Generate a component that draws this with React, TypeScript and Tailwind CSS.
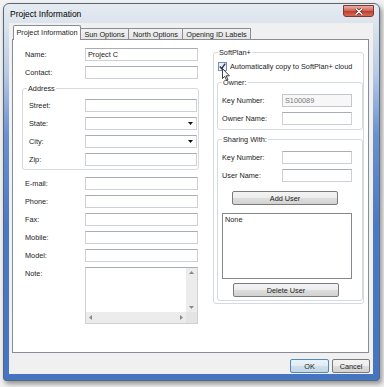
import type { ReactNode } from 'react';

const Box = ({ className = '' }: { className?: string }) => (
  <div className={`h-[13px] bg-white border border-[#cdd0d6] border-t-[#a9adb5] ${className}`} />
);

const Combo = () => (
  <div className="h-[13px] w-[112px] bg-white border border-[#cdd0d6] border-t-[#a9adb5] flex items-center justify-end pr-[3px]">
    <svg width="5" height="3" viewBox="0 0 5 3">
      <path d="M0 0h5L2.5 3z" fill="#111" />
    </svg>
  </div>
);

const Row = ({ label, labelClass, children }: { label: string; labelClass: string; children: ReactNode }) => (
  <div className="flex items-center">
    <span className={labelClass}>{label}</span>
    {children}
  </div>
);

const Btn = ({ children, className = '' }: { children: ReactNode; className?: string }) => (
  <div
    className={`h-[14px] flex items-center justify-center rounded-[2px] border border-[#7a7a7a] bg-[linear-gradient(to_bottom,#f4f4f4_0%,#ececec_50%,#dedede_50%,#d2d2d2_100%)] ${className}`}
  >
    {children}
  </div>
);

const Cursor = () => (
  <svg className="absolute left-[3px] top-[5px]" width="8" height="13" viewBox="0 0 8 13">
    <path d="M0.5 0.5v10l2.3-2.2 1.8 4 1.4-.6-1.8-3.9h3.2z" fill="#fff" stroke="#111" strokeWidth="0.8" strokeLinejoin="round" />
  </svg>
);

const Note = () => (
  <div className="w-[113px] h-[57px] border border-[#cdd0d6] border-t-[#a9adb5] bg-white grid grid-cols-[1fr_11px] grid-rows-[1fr_11px]">
    <div />
    <div className="bg-[#ececec] flex flex-col items-center justify-between py-[3px]">
      <svg width="5" height="3" viewBox="0 0 5 3"><path d="M0 3h5L2.5 0z" fill="#8a8a8a" /></svg>
      <svg width="5" height="3" viewBox="0 0 5 3"><path d="M0 0h5L2.5 3z" fill="#8a8a8a" /></svg>
    </div>
    <div className="bg-[#ececec] flex items-center justify-between px-[3px]">
      <svg width="3" height="5" viewBox="0 0 3 5"><path d="M3 0v5L0 2.5z" fill="#8a8a8a" /></svg>
      <svg width="3" height="5" viewBox="0 0 3 5"><path d="M0 0v5l3-2.5z" fill="#8a8a8a" /></svg>
    </div>
    <div className="bg-[#e4e4e4]" />
  </div>
);

const outer = 'w-[63px] pl-[3px]';
const inner = 'w-[62px] pl-[6px]';
const right = 'w-[64px] pl-[4px]';

export default function App() {
  return (
    <div className="w-[384px] h-[387px] overflow-hidden bg-[#f1f1f1] pt-[3px] pl-[3px] font-['Liberation_Sans',Arial,sans-serif] text-[7.3px] leading-[9px] text-[#1c1c1c]">
      <div className="w-[377px] h-[378px] rounded-t-[6px] rounded-b-[3px] border border-[#56687e] bg-[linear-gradient(to_bottom,#e6ebf1_0px,#dae2ec_22px,#b7c9e5_70px,#6b91cf_130px,#4b79c3_220px,#4574c0_100%)] shadow-[2px_3px_5px_rgba(0,0,0,0.4)] flex flex-col pl-[5px] pr-[6px] pb-[6px]">
        {/* title bar */}
        <div className="h-[19px] flex justify-between items-start">
          <span className="pt-[5px] pl-[1px] text-[8.5px] leading-[10px] text-black">Project Information</span>
          <div className="mt-[1px] -mr-[1px] w-[31px] h-[12px] rounded-b-[3px] border border-[#7a3a34] bg-[linear-gradient(to_bottom,#e9aea4_0%,#d0685a_45%,#c2402f_55%,#d46c59_100%)] flex items-center justify-center">
            <svg width="8" height="7" viewBox="0 0 8 7">
              <path d="M1 0.8l6 5.4M7 0.8l-6 5.4" stroke="#4a1c18" strokeWidth="2.6" strokeLinecap="round" />
              <path d="M1 0.8l6 5.4M7 0.8l-6 5.4" stroke="#fff" strokeWidth="1.5" strokeLinecap="round" />
            </svg>
          </div>
        </div>

        {/* client area */}
        <div className="flex-1 bg-[#f0f0f0] flex flex-col pt-[2px]">
          <div className="flex items-end h-[15px] ml-[4px] -mb-px relative z-10">
            <div className="h-[15px] w-[68px] bg-white border border-b-0 border-[#898c95] rounded-t-[2px] flex items-center justify-center pb-[1px]">
              Project Information
            </div>
            <div className="h-[12px] w-[49px] -ml-px border border-[#898c95] bg-[linear-gradient(to_bottom,#f3f3f3,#e4e4e4)] flex items-center justify-center">
              Sun Options
            </div>
            <div className="h-[12px] w-[55px] -ml-px border border-[#898c95] bg-[linear-gradient(to_bottom,#f3f3f3,#e4e4e4)] flex items-center justify-center">
              North Options
            </div>
            <div className="h-[12px] w-[69px] -ml-px border border-[#898c95] bg-[linear-gradient(to_bottom,#f3f3f3,#e4e4e4)] flex items-center justify-center">
              Opening ID Labels
            </div>
          </div>

          <div className="ml-[3px] w-[357px] h-[314px] bg-white border border-[#898c95] flex items-start">
            {/* left column */}
            <div className="ml-[9px] w-[177px] pt-[8px] flex flex-col gap-[5px]">
              <Row label="Name:" labelClass={outer}>
                <div className="h-[13px] w-[113px] bg-white border border-[#cdd0d6] border-t-[#a9adb5] flex items-center pl-[2px]">Project C</div>
              </Row>
              <Row label="Contact:" labelClass={outer}><Box className="w-[113px]" /></Row>
              <fieldset className="border border-[#d5dadf] rounded-[3px] pt-[6px] pb-[3px]">
                <legend className="ml-[4px] px-[1px]">Address</legend>
                <div className="flex flex-col gap-[5px]">
                  <Row label="Street:" labelClass={inner}><Box className="w-[112px]" /></Row>
                  <Row label="State:" labelClass={inner}><Combo /></Row>
                  <Row label="City:" labelClass={inner}><Combo /></Row>
                  <Row label="Zip:" labelClass={inner}><Box className="w-[112px]" /></Row>
                </div>
              </fieldset>
              <div className="mt-[2px]">
                <Row label="E-mail:" labelClass={outer}><Box className="w-[113px]" /></Row>
              </div>
              <Row label="Phone:" labelClass={outer}><Box className="w-[113px]" /></Row>
              <Row label="Fax:" labelClass={outer}><Box className="w-[113px]" /></Row>
              <Row label="Mobile:" labelClass={outer}><Box className="w-[113px]" /></Row>
              <Row label="Model:" labelClass={outer}><Box className="w-[113px]" /></Row>
              <div className="flex items-start">
                <span className={`${outer} pt-[2px]`}>Note:</span>
                <Note />
              </div>
            </div>

            {/* right column */}
            <div className="ml-[14px] w-[151px] pt-[8px]">
              <fieldset className="border border-[#d5dadf] rounded-[3px] pb-[2px]">
                <legend className="ml-[4px] px-[1px]">SoftPlan+</legend>
                <div className="flex items-center mt-[5px] pl-[4px]">
                  <div className="relative w-[9px] h-[9px] border border-[#7b90ab] bg-[linear-gradient(to_bottom,#e4ebf3,#f8fafc)] flex items-center justify-center">
                    <svg width="7" height="7" viewBox="0 0 7 7">
                      <path d="M0.8 3.6l1.8 2 3.6-5" stroke="#2b3a55" strokeWidth="1.5" fill="none" />
                    </svg>
                    <Cursor />
                  </div>
                  <span className="ml-[3px]">Automatically copy to SoftPlan+ cloud</span>
                </div>

                <fieldset className="ml-[3px] mt-[7px] w-[146px] border border-[#d5dadf] rounded-[3px] pt-[7px] pb-[4px]">
                  <legend className="ml-[4px] px-[1px]">Owner:</legend>
                  <div className="flex flex-col gap-[5px]">
                    <Row label="Key Number:" labelClass={right}>
                      <div className="h-[13px] w-[70px] bg-[#f7f7f7] border border-[#c3c6cc] flex items-center pl-[2px] text-[#7a7a7a]">S100089</div>
                    </Row>
                    <Row label="Owner Name:" labelClass={right}><Box className="w-[70px]" /></Row>
                  </div>
                </fieldset>

                <fieldset className="ml-[3px] mt-[5px] w-[146px] border border-[#d5dadf] rounded-[3px] pt-[7px] pb-[3px]">
                  <legend className="ml-[4px] px-[1px]">Sharing With:</legend>
                  <div className="flex flex-col items-start">
                    <Row label="Key Number:" labelClass={right}><Box className="w-[70px]" /></Row>
                    <div className="mt-[5px]">
                      <Row label="User Name:" labelClass={right}><Box className="w-[70px]" /></Row>
                    </div>
                    <Btn className="mt-[9px] ml-[14px] w-[106px]">Add User</Btn>
                    <div className="mt-[8px] ml-[4px] w-[130px] h-[66px] bg-white border border-[#828790] pl-[2px] pt-[1px]">None</div>
                    <Btn className="mt-[4px] ml-[15px] w-[106px]">Delete User</Btn>
                  </div>
                </fieldset>
              </fieldset>
            </div>
          </div>

          <div className="mt-[6px] flex justify-end gap-[3px] pr-[3px]">
            <div className="h-[14px] w-[39px] flex items-center justify-center rounded-[2px] border border-[#4f8ab8] bg-[linear-gradient(to_bottom,#eaf3f9_0%,#dfeaf2_50%,#cfdfeb_50%,#c3d6e5_100%)]">
              OK
            </div>
            <Btn className="w-[38px]">Cancel</Btn>
          </div>
        </div>
      </div>
    </div>
  );
}
